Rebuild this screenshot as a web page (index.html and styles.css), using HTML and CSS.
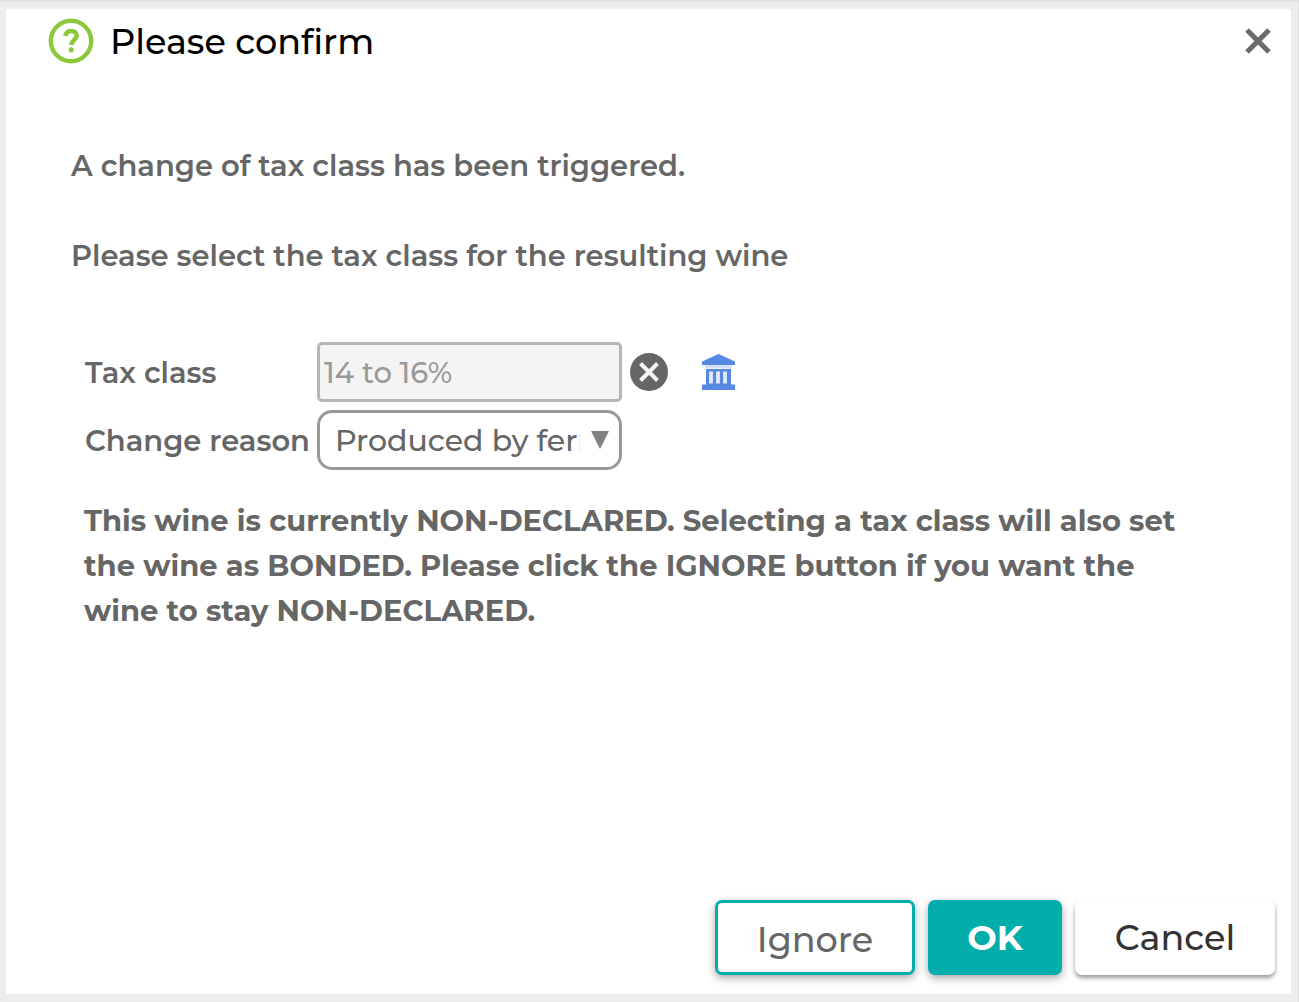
FILE: index.html
```html
<!DOCTYPE html>
<html lang="en">
<head>
    <meta charset="UTF-8">
    <title>Please confirm</title>
    <link rel="stylesheet" href="styles.css">
</head>
<body>

    <div class="dialog" role="dialog" aria-labelledby="dialog-title">
        <header class="dialog-header">
            <svg class="help-icon" viewBox="0 0 46 46" aria-hidden="true">
                <circle cx="23" cy="23" r="20.2" fill="none" stroke="#8cc83c" stroke-width="4.4"/>
                <path d="M17.500 18c.5-3.500 2.600-5 5.500-5 3.300 0 5.700 1.600 5.700 4.500 0 4.300-5.200 4.500-5.200 9.500" fill="none" stroke="#8cc83c" stroke-width="4.600"/>
                <circle cx="23.200" cy="31.800" r="2.600" fill="#8cc83c"/>
            </svg>
            <h1 id="dialog-title">Please confirm</h1>
            <button type="button" class="icon-button" aria-label="Close">
                <svg viewBox="0 0 26 26" width="26" height="26">
                    <path d="M2 2l22 22M24 2L2 24" stroke="#6c6c6c" stroke-width="5.200"/>
                </svg>
            </button>
        </header>

        <form class="dialog-body">
            <p class="message">A change of tax class has been triggered.</p>
            <p class="message">Please select the tax class for the resulting wine</p>

            <div class="fields">
                <label for="tax-class">Tax class</label>
                <input type="text" id="tax-class" class="field" value="14 to 16%" disabled>
                <div class="field-actions">
                    <button type="button" class="icon-button" aria-label="Clear tax class">
                        <svg viewBox="0 0 38 38" width="38" height="38">
                            <circle cx="19" cy="19" r="19" fill="#666"/>
                            <path d="M10.500 10.500l17 17M27.500 10.500l-17 17" stroke="#f4f4f4" stroke-width="4"/>
                        </svg>
                    </button>
                    <button type="button" class="icon-button" aria-label="Choose tax class">
                        <svg viewBox="0 0 33 36" width="33" height="36">
                            <g fill="#5788e2">
                                <path d="M16.500 0L33 7.500V11H0V7.500z"/>
                                <path d="M4 15h25v15.500h4V36H0v-5.500h4z"/>
                            </g>
                            <path d="M3 11h27v3.500H3z" fill="#d5e1f8"/>
                            <path d="M9 17.500v12M16 17.500v12M23 17.500v12" stroke="#e4ecfb" stroke-width="3.800"/>
                        </svg>
                    </button>
                </div>

                <label for="change-reason">Change reason</label>
                <div class="select-wrap">
                    <select id="change-reason" class="field">
                        <option>Produced by fermentation</option>
                    </select>
                    <svg class="arrow" viewBox="0 0 18 18" aria-hidden="true">
                        <path d="M0 0h18L9 18z" fill="#808080"/>
                    </svg>
                </div>
            </div>

            <p class="notice">This wine is currently NON-DECLARED. Selecting a tax class will also set the wine as BONDED. Please click the IGNORE button if you want the wine to stay NON-DECLARED.</p>
        </form>

        <footer class="dialog-footer">
            <button type="button" class="button ignore">Ignore</button>
            <button type="button" class="button ok">OK</button>
            <button type="button" class="button cancel">Cancel</button>
        </footer>
    </div>

</body>
</html>
```
FILE: styles.css
```css
* {
    box-sizing: border-box;
}

body {
    margin: 0;
    min-height: 100vh;
    display: flex;
    padding: 7px 7px 8px 6px;
    border-top: 2px solid #e0e0e0;
    border-right: 1px solid #e0e0e0;
    background-color: #ededed;
    color: #666;
    font-family: Montserrat, Inter, sans-serif;
    font-size: 29px;
    font-weight: 600;
    line-height: 45px;
}

.dialog {
    flex: 1;
    display: flex;
    flex-direction: column;
    background-color: white;
}

.dialog-header {
    display: flex;
    align-items: center;
    height: 64px;
    padding: 0 20px 0 42px;
}

.help-icon {
    width: 46px;
    height: 46px;
}

h1 {
    flex: 1;
    margin: 0 0 0 16px;
    color: black;
    font-size: 35px;
    font-weight: 500;
}

.icon-button {
    display: flex;
    padding: 0;
    border: none;
    background: none;
    cursor: pointer;
}

.dialog-body {
    flex: 1;
    padding: 70px 78px 0 65px;
}

.message {
    margin: 0 0 45px;
}

.fields {
    display: grid;
    grid-template-columns: 232px 305px auto;
    row-gap: 8px;
    align-items: center;
    justify-content: start;
    margin: 64px 0 0 14px;
}

.field {
    width: 100%;
    height: 60px;
    border: 3px solid #999;
    color: #666;
    font: inherit;
    font-weight: 500;
}

input.field {
    padding: 0 4px;
    border-color: #b6b6b6;
    border-radius: 5px;
    background-color: #f4f4f4;
    color: #999;
}

.field-actions {
    display: flex;
    align-items: center;
    gap: 34px;
    padding-left: 8px;
}

.select-wrap {
    position: relative;
}

select.field {
    display: block;
    padding: 0 39px 0 15px;
    border-radius: 15px;
    background-color: white;
    font-size: 30px;
    appearance: none;
}

.arrow {
    position: absolute;
    top: 21px;
    right: 13px;
    width: 18px;
    height: 18px;
    pointer-events: none;
}

.notice {
    margin: 28px 0 0 13px;
    font-weight: 700;
}

.dialog-footer {
    display: flex;
    justify-content: flex-end;
    gap: 13px;
    padding: 0 16px 19px;
}

.button {
    min-width: 134px;
    height: 75px;
    padding: 0 36px;
    border: none;
    border-radius: 7px;
    background-color: white;
    box-shadow: 0 3px 8px rgba(0, 0, 0, 0.35);
    font: inherit;
    font-size: 35px;
    font-weight: 500;
    cursor: pointer;
}

.ignore {
    min-width: 200px;
    padding-top: 4px;
    border: 3px solid #03adab;
    color: #666;
}

.ok {
    background-color: #03adab;
    color: white;
    font-weight: 700;
}

.cancel {
    min-width: 200px;
    box-shadow: 0 3px 4px rgba(0, 0, 0, 0.4);
    color: #333;
}
```
